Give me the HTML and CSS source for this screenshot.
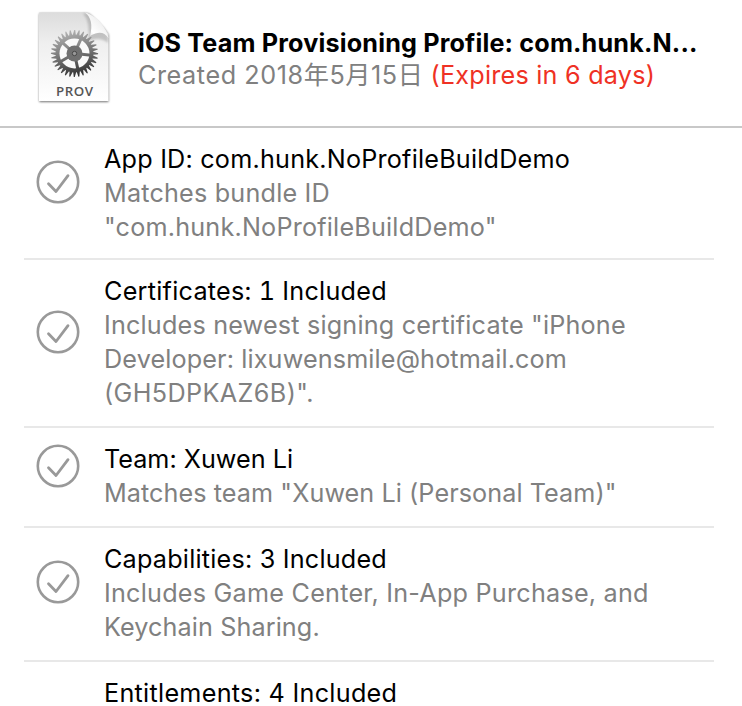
FILE: index.html
```html
<!DOCTYPE html>
<html lang="en">
<head>
<meta charset="utf-8">
<title>Provisioning Profile</title>
<link rel="stylesheet" href="styles.css">
</head>
<body>
<header class="profile">
  <svg class="file-icon" viewBox="0 0 82 102" width="82" height="102" aria-hidden="true">
    <defs>
      <linearGradient id="paper" x1="0" y1="0" x2="0" y2="1"><stop offset="0" stop-color="#dcdcdc"/><stop offset=".35" stop-color="#efefef"/><stop offset="1" stop-color="#fff"/></linearGradient>
      <linearGradient id="metal" gradientUnits="userSpaceOnUse" x1="34" y1="22" x2="46" y2="68"><stop offset="0" stop-color="#b4b4b4"/><stop offset=".5" stop-color="#777"/><stop offset="1" stop-color="#303030"/></linearGradient>
      <linearGradient id="curl" x1="0" y1="1" x2=".7" y2=".3"><stop offset="0" stop-color="#cfcfcf"/><stop offset=".4" stop-color="#fff"/><stop offset="1" stop-color="#eee"/></linearGradient>
      <filter id="soft" x="-20%" y="-20%" width="140%" height="140%"><feGaussianBlur stdDeviation="1"/></filter>
    </defs>
    <path d="M5.3 5H54Q65 12 74.5 26V93.5H5.3Z" transform="translate(0 .5)" fill="#000" opacity=".55" filter="url(#soft)"/>
    <path d="M5 4.5H53Q65 12 74.5 26V93H5Z" fill="url(#paper)"/>
    <path d="M49 5Q57 15 54 33Q66 28 74 35V28L56 6Z" fill="#777" opacity=".35" filter="url(#soft)"/>
    <path d="M51 4.5C57 9 59 17 56 28C65 23 70 24 74.5 30C73 20 62 7 51 4.5Z" fill="url(#curl)"/>
    <polygon id="teeth" fill="url(#metal)"/>
    <circle cx="40.5" cy="45.5" r="15" fill="#fafafa"/>
    <g id="spokes" stroke="url(#metal)" stroke-width="3"></g>
    <circle cx="40.5" cy="45.5" r="8" fill="#707070"/>
    <circle cx="40.5" cy="45.5" r="2.2" fill="#999" stroke="#484848" stroke-width="1"/>
    <text class="file-type" x="40.5" y="88.3" text-anchor="middle" textLength="37">PROV</text>
  </svg>
  <div class="profile-text">
    <h1 class="title"><span class="t0">iOS Team Provisioning Profile: com.hunk.N...</span></h1>
    <p class="created"><span class="t1">Created 2018年5月15日</span> <span class="expires t2">(Expires in 6 days)</span></p>
  </div>
</header>
<main class="list">
  <section class="row first">
    <svg class="check" viewBox="0 0 44 44"><circle cx="22" cy="22" r="20.2"/><path d="M12.5 23.7L20 31.5L32 15.7"/></svg>
    <div class="copy"><h2><span class="t3">App ID: com.hunk.NoProfileBuildDemo</span></h2><p><span class="t4">Matches bundle ID</span><br><span class="t5">"com.hunk.NoProfileBuildDemo"</span></p></div>
  </section>
  <section class="row">
    <svg class="check" viewBox="0 0 44 44"><circle cx="22" cy="22" r="20.2"/><path d="M12.5 23.7L20 31.5L32 15.7"/></svg>
    <div class="copy"><h2><span class="t6">Certificates: 1 Included</span></h2><p><span class="t7">Includes newest signing certificate "iPhone</span><br><span class="t8">Developer: lixuwensmile@hotmail.com</span><br><span class="t9">(GH5DPKAZ6B)".</span></p></div>
  </section>
  <section class="row">
    <svg class="check" viewBox="0 0 44 44"><circle cx="22" cy="22" r="20.2"/><path d="M12.5 23.7L20 31.5L32 15.7"/></svg>
    <div class="copy"><h2><span class="t10">Team: Xuwen Li</span></h2><p><span class="t11">Matches team "Xuwen Li (Personal Team)"</span></p></div>
  </section>
  <section class="row capabilities">
    <svg class="check" viewBox="0 0 44 44"><circle cx="22" cy="22" r="20.2"/><path d="M12.5 23.7L20 31.5L32 15.7"/></svg>
    <div class="copy"><h2><span class="t12">Capabilities: 3 Included</span></h2><p><span class="t13">Includes Game Center, In-App Purchase, and</span><br><span class="t14">Keychain Sharing.</span></p></div>
  </section>
  <section class="row last">
    <div class="check"></div>
    <div class="copy"><h2><span class="t15">Entitlements: 4 Included</span></h2></div>
  </section>
</main>
<script src="gear.js"></script>
</body>
</html>
```
FILE: styles.css
```css
* { box-sizing: border-box; }
html, body { margin: 0; height: 706px; overflow: hidden; background: #fff; }
body { font-family: Inter, "Noto Sans CJK SC", sans-serif; font-size: 25.2px; line-height: 34px; color: #000; }
h1, h2, p { margin: 0; font-size: inherit; font-weight: 430; white-space: nowrap; }
.profile { display: flex; height: 128px; padding-top: 8px; padding-left: 34px; border-bottom: 2px solid #c8c8c8; }
.file-icon { flex: none; }
.file-type { font: 600 13.3px "Open Sans", sans-serif; fill: #555; }
.profile-text { padding: 18px 0 0 22px; }
.profile-text .title { font-weight: 700; height: 32px; }
.created { color: #808080; height: 34px; line-height: 34px; }
.expires { color: #ef3124; }
.list { padding: 0 28px 0 24px; }
.row { display: flex; align-items: center; padding: 14px 0 16px; border-bottom: 2px solid #e8e8e8; }
.row.first { padding-bottom: 14px; }
.row.last { border: 0; }
.check { flex: none; width: 44px; height: 44px; margin: 0 24px 20px 12px; fill: none; stroke: #999; stroke-width: 2.6; stroke-linecap: round; stroke-linejoin: round; }
.check path { stroke-width: 2.8; }
.first .check, .capabilities .check { margin-bottom: 22px; }
.last .check { height: 0; margin-bottom: 0; }
.copy p { color: #808080; }

.t0 { letter-spacing: .16px; }
.t1 { letter-spacing: .57px; }
.t2 { letter-spacing: .22px; }
.t3 { letter-spacing: .21px; }
.t4 { letter-spacing: .19px; }
.t5 { letter-spacing: .2px; }
.t6 { letter-spacing: .26px; font-variant-numeric: tabular-nums; }
.t7 { letter-spacing: .18px; }
.t8 { letter-spacing: .13px; }
.t9 { letter-spacing: .38px; }
.t11 { letter-spacing: .07px; }
.t12 { letter-spacing: .21px; }
.t13 { letter-spacing: .23px; }
.t14 { letter-spacing: .1px; }
.t15 { letter-spacing: .28px; }
```
FILE: gear.js
```js
// Builds the gear's toothed rim and its five spokes.
const cx = 40.5, cy = 45.5, count = 32;
const at = (r, a) => (cx + r * Math.cos(a)).toFixed(2) + "," + (cy + r * Math.sin(a)).toFixed(2);
const pts = [];
for (let i = 0; i < count; i++) {
  const a = i * 2 * Math.PI / count;
  pts.push(at(18.8, a - 0.09), at(23.6, a - 0.01), at(23.6, a + 0.03), at(18.8, a + 0.07));
}
document.getElementById("teeth").setAttribute("points", pts.join(" "));
const spokes = document.getElementById("spokes");
for (let i = 0; i < 5; i++) {
  const a = (i * 72 + 6) * Math.PI / 180;
  const l = document.createElementNS("http://www.w3.org/2000/svg", "line");
  const [x, y] = at(17, a).split(",");
  l.setAttribute("x1", cx); l.setAttribute("y1", cy);
  l.setAttribute("x2", x); l.setAttribute("y2", y);
  spokes.appendChild(l);
}
```
